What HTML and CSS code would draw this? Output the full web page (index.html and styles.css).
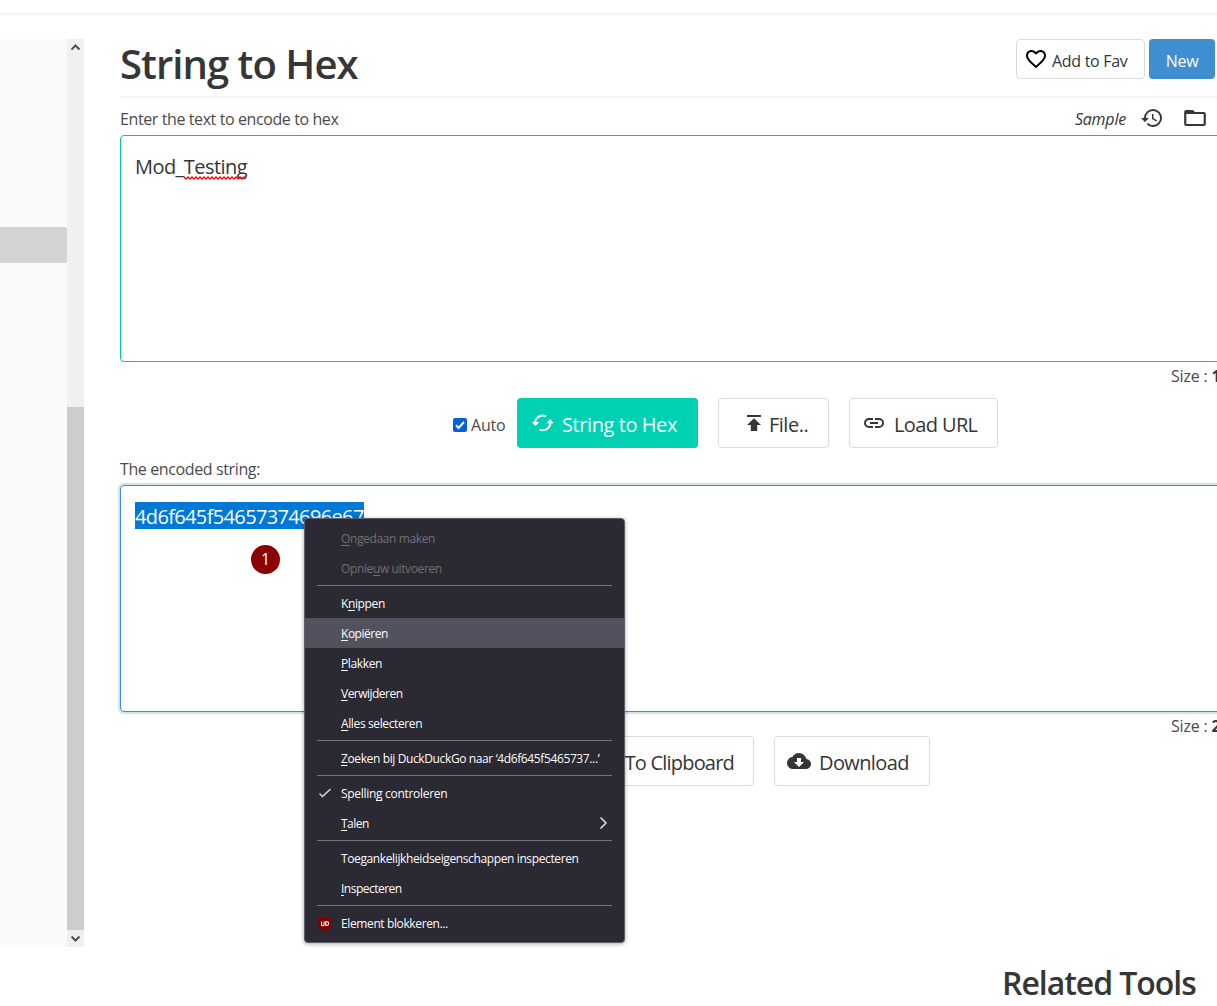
FILE: index.html
```html
<!DOCTYPE html>
<html lang="en">
<head>
<meta charset="utf-8">
<title>String to Hex</title>
<link rel="stylesheet" href="styles.css">
</head>
<body>
<div class="topbar"></div>
<div class="page">
  <aside class="sidebar">
    <div class="side-list"><div class="side-active"></div></div>
    <div class="scrollbar">
      <svg class="arrow" width="17" height="17" viewBox="0 0 17 17"><path d="M4.5 10.5l4-4 4 4" /></svg>
      <div class="thumb"></div>
      <svg class="arrow" width="17" height="17" viewBox="0 0 17 17"><path d="M4.5 6.5l4 4 4-4" /></svg>
    </div>
  </aside>
  <main class="main">
    <header class="header">
      <h1 class="title">String to Hex</h1>
      <div class="actions">
        <button class="btn fav">
          <svg width="24" height="24" viewBox="0 0 24 24" fill="#000"><path d="M16.5 3c-1.74 0-3.41.81-4.5 2.09C10.91 3.81 9.24 3 7.5 3 4.42 3 2 5.42 2 8.5c0 3.78 3.4 6.86 8.55 11.54L12 21.35l1.45-1.32C18.6 15.36 22 12.28 22 8.5 22 5.42 19.58 3 16.5 3zm-4.4 15.55l-.1.1-.1-.1C7.14 14.24 4 11.39 4 8.5 4 6.5 5.5 5 7.5 5c1.54 0 3.04.99 3.57 2.36h1.87C13.46 5.99 14.96 5 16.5 5c2 0 3.5 1.5 3.5 3.5 0 2.89-3.14 5.74-7.9 10.05z"/></svg>
          <span class="t-fav">Add to Fav</span>
        </button>
        <button class="btn new"><span class="t-new">New</span></button>
      </div>
    </header>
    <div class="label-row">
      <span class="t-enter">Enter the text to encode to hex</span>
      <div class="tools">
        <em class="t-sample">Sample</em>
        <svg class="history" width="24" height="24" viewBox="0 0 24 24"><path d="M13 3a9 9 0 0 0-9 9H1l3.89 3.89.07.14L9 12H6c0-3.87 3.13-7 7-7s7 3.13 7 7-3.13 7-7 7c-1.93 0-3.68-.79-4.94-2.06l-1.42 1.42A8.954 8.954 0 0 0 13 21a9 9 0 0 0 0-18zm-1 5v5l4.28 2.54.72-1.21-3.5-2.08V8H12z"/></svg>
        <svg class="folder" width="26" height="24" viewBox="0 0 24 24" preserveAspectRatio="none"><path d="M20 18H4V8h16m0-2h-8l-2-2H4c-1.1 0-2 .9-2 2v12c0 1.1.9 2 2 2h16c1.1 0 2-.9 2-2V8c0-1.100-.9-2-2-2z"/></svg>
      </div>
    </div>
    <div class="area input"><span class="t-mod">Mod_<span class="misspelt">Testing<svg class="squiggle" width="62" height="4" viewBox="0 0 62 4"><path d="M0 1l2 2 2-2 2 2 2-2 2 2 2-2 2 2 2-2 2 2 2-2 2 2 2-2 2 2 2-2 2 2 2-2 2 2 2-2 2 2 2-2 2 2 2-2 2 2 2-2 2 2 2-2 2 2 2-2 2 2 2-2 2 2"/></svg></span></span></div>
    <div class="size-row"><span class="t-size">Size : <b>15</b></span></div>
    <div class="button-row">
      <label class="auto"><span class="check"><svg width="14" height="14" viewBox="0 0 14 14"><path d="M3 7.300l2.600 2.700L11 4"/></svg></span><span class="t-auto">Auto</span></label>
      <button class="btn big convert">
        <svg width="24" height="20" viewBox="0 0 24 20"><path class="stroke" d="M4.200 10A7.700 7 0 0 1 15 3.200M19.200 9.500A7.700 7 0 0 1 8.500 16.600"/><path d="M.8 9h7.400L4.500 13zM15.500 10.300h7.200L19.100 6z"/></svg>
        <span class="t-convert">String to Hex</span>
      </button>
      <button class="btn big file">
        <svg width="16" height="18" viewBox="0 0 16 18"><path d="M1 0h14v2H1zM8 3.200l7 6.800h-3.800v6H4.800v-6H1z"/></svg>
        <span class="t-file">File..</span>
      </button>
      <button class="btn big url">
        <svg width="24" height="24" viewBox="0 0 24 24"><path d="M3.900 12c0-1.710 1.390-3.100 3.100-3.100h4V7H7a5 5 0 0 0 0 10h4v-1.900H7c-1.710 0-3.100-1.390-3.100-3.100zM8 13h8v-2H8v2zm9-6h-4v1.900h4a3.100 3.100 0 0 1 0 6.200h-4V17h4a5 5 0 0 0 0-10z"/></svg>
        <span class="t-url">Load URL</span>
      </button>
    </div>
    <div class="label-row second"><span class="t-encoded">The encoded string:</span></div>
    <div class="area output"><span class="t-hex">4d6f645f54657374696e67</span></div>
    <div class="size-row short"><span class="t-size">Size : <b>22</b></span></div>
    <div class="button-row lower">
      <button class="btn big copy"><span class="t-copy">Copy To Clipboard</span></button>
      <button class="btn big download">
        <svg width="24" height="24" viewBox="0 0 24 24"><path d="M19.350 10.040A7.490 7.490 0 0 0 12 4C9.110 4 6.600 5.640 5.350 8.040A5.994 5.994 0 0 0 0 14c0 3.310 2.690 6 6 6h13c2.760 0 5-2.240 5-5 0-2.640-2.050-4.780-4.650-4.960zM17 13l-5 5-5-5h3V9h4v4h3z"/></svg>
        <span class="t-download">Download</span>
      </button>
    </div>
    <h2 class="related">Related Tools</h2>
  </main>
</div>

<div class="step">1</div>

<div class="menu">
  <div class="item off"><span class="m1"><u>O</u>ngedaan maken</span></div>
  <div class="item off"><span class="m2">Opnie<u>u</u>w uitvoeren</span></div>
  <div class="sep"></div>
  <div class="item"><span class="m3">K<u>n</u>ippen</span></div>
  <div class="item hover"><span class="m4"><u>K</u>opiëren</span></div>
  <div class="item"><span class="m5"><u>P</u>lakken</span></div>
  <div class="item"><span class="m6"><u>V</u>erwijderen</span></div>
  <div class="item"><span class="m7"><u>A</u>lles selecteren</span></div>
  <div class="sep"></div>
  <div class="item"><span class="m8"><u>Z</u>oeken bij DuckDuckGo naar ‘4d6f645f5465737...’</span></div>
  <div class="sep"></div>
  <div class="item"><svg class="tick" width="14" height="12" viewBox="0 0 14 12"><path d="M1.500 6.500l3 3L12.500 2"/></svg><span class="m9">Spellin<u>g</u> controleren</span></div>
  <div class="item"><span class="m10"><u>T</u>alen</span><svg class="chev" width="9" height="14" viewBox="0 0 9 14"><path d="M1.500 1.500L7 7l-5.500 5.500"/></svg></div>
  <div class="sep"></div>
  <div class="item"><span class="m11">Toegankelijkheidseigenschappen inspecteren</span></div>
  <div class="item"><span class="m12"><u>I</u>nspecteren</span></div>
  <div class="sep"></div>
  <div class="item"><svg class="shield" width="16" height="16" viewBox="0 0 16 16"><path class="plate" d="M8 .5c2 1.500 4.500 1.700 7 1.700 0 6.500-.5 10.300-7 13.300C1.500 12.500 1 8.700 1 2.200 3.500 2.200 6 2 8 .5z"/><path class="mark" d="M4.500 5.500v3a1.200 1.200 0 0 0 2.600 0v-3M8.800 5.700h1a1.900 1.900 0 0 1 0 3.800h-1z"/></svg><span class="m13">Element blokkeren...</span></div>
</div>
</body>
</html>
```

FILE: styles.css
```css
* { box-sizing: border-box; }
html, body { margin: 0; height: 1006px; overflow: hidden; }
body { position: relative; background: #fff; color: #4a4a4a; font: 16px/24px "Open Sans", "Noto Sans", sans-serif; }
span, em, h1, h2 { white-space: nowrap; }
svg { flex: none; fill: #363636; }
.topbar { height: 15px; border-bottom: 2px solid #f3f3f3; }
.page { display: flex; width: 1253px; padding-top: 24px; }

.sidebar { display: flex; flex: none; width: 84px; height: 908px; background: #fafafa; }
.side-list { width: 67px; padding-top: 188px; }
.side-active { height: 36px; background: #d3d3d3; border-radius: 0 2px 2px 0; }
.scrollbar { display: flex; flex-direction: column; width: 17px; background: #f0f0f0; }
.thumb { height: 523px; margin-top: auto; background: #cdcdcd; }
.arrow { fill: none; stroke: #505050; stroke-width: 2; }

.main { flex: none; width: 1133px; margin-left: 36px; }
.header { display: flex; justify-content: space-between; height: 59px; padding-right: 38px; border-bottom: 2px solid #f5f5f5; }
.title { margin: 0; color: #363636; font-size: 40px; font-weight: 600; line-height: 50px; letter-spacing: -.95px; }
.actions { display: flex; gap: 4px; }
.btn { display: flex; align-items: center; height: 40px; padding: 0; border: 1px solid #dbdbdb; border-radius: 4px; background: #fff; color: #363636; font: inherit; }
.fav { width: 129px; padding: 3px 0 0 7px; }
.fav svg { margin: -4px 4px 0 0; fill: #000; }
.new { justify-content: center; width: 66px; padding-top: 3px; border: 0; background: #3e8ed0; color: #fff; }
.label-row { display: flex; justify-content: space-between; height: 37px; padding: 9px 45px 0 0; }
.tools { display: flex; color: #363636; }
.history { margin: -1px 0 0 14px; }
.folder { margin: -1px 0 0 18px; }

.area { width: 1120px; height: 227px; padding: 16px 14px; border: 1px solid #00c4a7; border-radius: 4px; color: #363636; font-size: 20px; line-height: 30px; }
.output { border-color: #3e8ed0; box-shadow: 0 0 0 2px rgba(62, 142, 208, .25); }
.misspelt { position: relative; }
.squiggle { position: absolute; left: 0; bottom: 0; fill: none; stroke: #f00; stroke-width: 1.4; }
.t-hex { display: inline-block; height: 27px; line-height: 29px; background: #0078d7; color: #fff; }
.size-row { height: 36px; padding-left: 1051px; line-height: 28px; }
.size-row.short { height: 24px; }
.size-row b { color: #363636; }

.button-row { display: flex; height: 50px; padding-left: 333px; }
.auto { display: flex; align-items: center; width: 64px; padding-top: 3px; }
.check { display: flex; margin-right: 4px; border-radius: 2px; background: #0060df; }
.check svg { fill: none; stroke: #fff; stroke-width: 2; }
.big { height: 50px; font-size: 20px; padding-top: 4px; }
.big svg { margin-top: -5px; }
.convert { width: 181px; padding-left: 14px; border: 0; background: #00d1b2; color: #fff; }
.convert svg { margin-right: 7px; fill: #fff; }
.convert .stroke { fill: none; stroke: #fff; stroke-width: 2; }
.file { width: 111px; margin-left: 20px; padding-left: 27px; }
.file svg { margin: -3px 7px 0 0; }
.url { width: 149px; margin-left: 20px; padding-left: 12px; }
.url svg { margin-right: 8px; }
.lower { justify-content: flex-end; padding: 0 323px 0 0; }
.copy { justify-content: flex-end; width: 215px; padding-right: 19px; }
.download { width: 156px; margin-left: 20px; padding-left: 12px; }
.download svg { margin-right: 8px; }
.related { margin: 177px 0 0 882px; color: #363636; font-size: 32px; font-weight: 600; line-height: 40px; letter-spacing: -1.05px; }

.t-enter { letter-spacing: -.4px; }
.t-encoded { letter-spacing: -.38px; }
.t-sample { letter-spacing: -.2px; }
.t-fav, .t-new { letter-spacing: -.3px; }
.t-mod { letter-spacing: -.55px; }
.t-hex { letter-spacing: -.64px; }
.t-convert { letter-spacing: -.42px; }
.t-file { letter-spacing: -.5px; }
.t-url, .t-download { letter-spacing: -.62px; }
.t-copy { letter-spacing: -.8px; }
.t-size, .t-auto { letter-spacing: -.2px; }

.step { position: absolute; left: 251px; top: 545px; width: 29px; height: 29px; border-radius: 50%; background: #8b0000; color: #fff; font-size: 16px; line-height: 29px; text-align: center; }

.menu { position: absolute; left: 304px; top: 518px; width: 321px; height: 425px; padding: 4px 0; border: 1px solid #5e5d67; border-radius: 4px; background: #2b2a33; box-shadow: 0 1px 4px rgba(0, 0, 0, .35); color: #fbfbfe; font-size: 12px; }
.item { display: flex; position: relative; align-items: center; height: 30px; padding: 1px 0 0 36px; letter-spacing: -.38px; }
.item u { text-underline-offset: 2px; text-decoration-skip-ink: none; }
.off { color: #6f6e76; }
.hover { background: #52525e; }
.sep { height: 5px; margin: 0 12px; padding-top: 2px; }
.sep::before { content: ""; display: block; height: 1px; background: #75747b; }
.m4 { letter-spacing: -.48px; }
.m6, .m10, .m12 { letter-spacing: -.52px; }
.m9 { letter-spacing: -.3px; }
.tick { position: absolute; left: 13px; top: 9px; fill: none; stroke: #dedee2; stroke-width: 1.3; }
.chev { margin: -2px 16px 0 auto; fill: none; stroke: #dedee2; stroke-width: 1.5; }
.shield { position: absolute; left: 12px; top: 8px; }
.plate { fill: #800000; }
.mark { fill: none; stroke: #fff; stroke-width: 1.1; }
```
